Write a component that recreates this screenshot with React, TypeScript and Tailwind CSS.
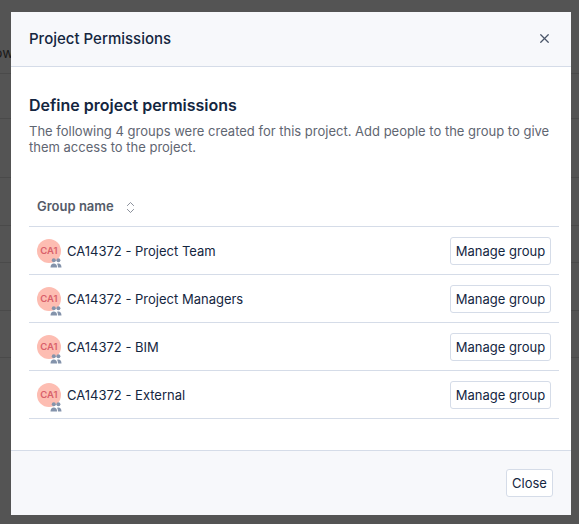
import { X, ChevronsUpDown } from 'lucide-react';

const groups = [
  'CA14372 - Project Team',
  'CA14372 - Project Managers',
  'CA14372 - BIM',
  'CA14372 - External',
];

function GroupAvatar() {
  return (
    <div className="relative h-6 w-6 shrink-0">
      <div className="flex h-6 w-6 items-center justify-center rounded-full bg-[#fdbdb2] text-[9.5px] font-semibold text-[#d9606a]">
        CA1
      </div>
      <svg
        className="absolute -bottom-[5px] -right-[1px]"
        width="12"
        height="10"
        viewBox="0 0 12 10"
        fill="#8493ab"
      >
        <circle cx="3.8" cy="2.2" r="2" />
        <circle cx="8.4" cy="2.2" r="2" />
        <path d="M0.5 9.5c0-2.4 1.4-4 3.3-4s3.300 1.600 3.300 4z" />
        <path d="M8 9.500h3.500c0-2.400-1.200-4-3.100-4-.5 0-.9.100-1.300.300C7.700 6.800 8 8 8 9.500z" />
      </svg>
    </div>
  );
}

export default function App() {
  return (
    <div className="relative h-[524px] w-[579px] overflow-hidden bg-[#545454] font-['Inter',sans-serif]">
      {/* page behind the overlay */}
      <div className="pt-[45px] text-sm text-[#1a1a1a]">
        <div className="h-[29px] border-b border-[#4a4a4a] leading-4">
          <span className="-ml-[6px] inline-block">ow</span>
        </div>
        <div className="h-[45px] border-b border-[#4a4a4a]" />
        <div className="h-[59px] border-b border-[#4a4a4a]" />
        <div className="h-[48px] border-b border-[#4a4a4a]" />
        <div className="h-[37px] border-b border-[#4a4a4a]" />
        <div className="h-[48px] border-b border-[#4a4a4a]" />
        <div className="h-[47px] border-b border-[#4a4a4a]" />
      </div>

      {/* modal */}
      <div className="absolute left-[11px] top-[12px] flex h-[503px] w-[560px] flex-col rounded-[2px] bg-white">
        <div className="flex h-[55px] items-center justify-between border-b border-[#d5dce8] bg-[#f7f8fb] pl-[18px] pr-[19px]">
          <h2 className="text-[15px] font-medium text-[#14263f]">Project Permissions</h2>
          <X size={15} className="-translate-y-px text-[#4a5568]" />
        </div>

        <div className="flex-1 pl-[18px] pr-[12px] pt-[28px]">
          <h3 className="text-base leading-[20px] font-semibold text-[#14263f]">Define project permissions</h3>
          <p className="mt-[8px] text-[13px] leading-4 text-[#5f6672]">
            The following 4 groups were created for this project. Add people to the group to give them access to the project.
          </p>

          <div className="mt-[25px]">
            <div className="flex h-[47px] items-center gap-[9px] border-b border-[#d5dce8] pl-2 pt-[8px]">
              <span className="text-[13px] font-semibold text-[#545b69]">Group name</span>
              <ChevronsUpDown size={15} strokeWidth={1.25} className="text-[#6b7280]" />
            </div>
            {groups.map((group) => (
              <div key={group} className="flex h-12 items-center justify-between border-b border-[#d5dce8] pl-2 pr-2 pt-px">
                <div className="flex items-center gap-[6px]">
                  <GroupAvatar />
                  <span className="pt-[2px] text-[13px] text-[#14263f]">{group}</span>
                </div>
                <button className="h-[28px] w-[101px] rounded-[3px] border border-[#d5dce8] bg-white pt-[2px] text-center text-[13px] text-[#14263f]">
                  Manage group
                </button>
              </div>
            ))}
          </div>
        </div>

        <div className="flex h-[65px] items-center justify-end border-t border-[#d5dce8] bg-[#f7f8fb] px-[18px]">
          <button className="h-[28px] w-[47px] rounded-[3px] border border-[#d5dce8] bg-white pt-[2px] text-center text-[13px] text-[#14263f]">
            Close
          </button>
        </div>
      </div>
    </div>
  );
}
